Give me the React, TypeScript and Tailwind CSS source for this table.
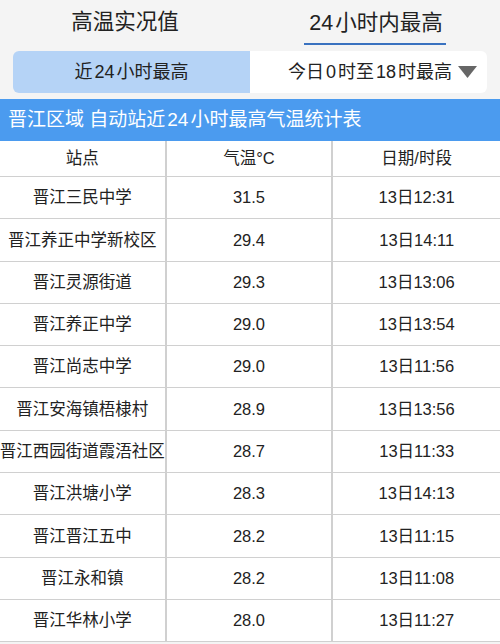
const rows: [string, string, string][] = [
  ['晋江三民中学', '31.5', '13日12:31'],
  ['晋江养正中学新校区', '29.4', '13日14:11'],
  ['晋江灵源街道', '29.3', '13日13:06'],
  ['晋江养正中学', '29.0', '13日13:54'],
  ['晋江尚志中学', '29.0', '13日11:56'],
  ['晋江安海镇梧棣村', '28.9', '13日13:56'],
  ['晋江西园街道霞浯社区', '28.7', '13日11:33'],
  ['晋江洪塘小学', '28.3', '13日14:13'],
  ['晋江晋江五中', '28.2', '13日11:15'],
  ['晋江永和镇', '28.2', '13日11:08'],
  ['晋江华林小学', '28.0', '13日11:27'],
];

const font = { fontFamily: '"Liberation Sans", "Noto Sans CJK SC", sans-serif' };

// digits get a little breathing room next to CJK, like iOS does
function Spaced({ text }: { text: string }) {
  return (
    <>
      {text.split(/(\d+)/).map((part, i) =>
        /^\d+$/.test(part) ? (
          <span key={i} className="px-[2px]">{part}</span>
        ) : (
          <span key={i}>{part}</span>
        ),
      )}
    </>
  );
}

function Row({ cells, header }: { cells: [string, string, string]; header?: boolean }) {
  return (
    <div className={`grid grid-cols-3 border-b border-[#d0d0d0] bg-white ${header ? 'h-[36px]' : 'h-[42.3px]'}`}>
      {cells.map((c, i) => (
        <div
          key={i}
          className={`flex items-center justify-center whitespace-nowrap text-[16.5px] text-[#222] ${i < 2 ? 'border-r-2 border-[#d0d0d0]' : ''}`}
        >
          {c}
        </div>
      ))}
    </div>
  );
}

export default function App() {
  return (
    <div className="w-[500px] h-[644px] overflow-hidden bg-[#f4f4f4]" style={font}>
      <div className="grid grid-cols-2 h-[45px]">
        <div className="flex items-center justify-center text-[21.5px] text-[#222]">高温实况值</div>
        <div className="flex flex-col items-center justify-end">
          <div className="text-[21.5px] text-[#222] leading-none pb-[9px]">
            <Spaced text="24小时内最高" />
          </div>
          <div className="w-[142px] h-[2px] bg-[#3a72c0]" />
        </div>
      </div>
      <div className="flex mx-[13px] mt-[6px] h-[42px] rounded-md overflow-hidden">
        <div className="w-[237px] bg-[#b5d3f6] flex items-center justify-center text-[18px] text-[#222]">
          <Spaced text="近24小时最高" />
        </div>
        <div className="flex-1 bg-white flex items-center justify-end pr-[10px] gap-[6px] text-[18px] text-[#222]">
          <span>
            <Spaced text="今日0时至18时最高" />
          </span>
          <svg width="19" height="14" viewBox="0 0 19 14">
            <path d="M0 1 H19 L9.5 13 Z" fill="#666" />
          </svg>
        </div>
      </div>
      <div className="mt-[6px] h-[42px] bg-[#4b9bef] flex items-center pl-[8px] text-[19px] text-white whitespace-nowrap">
        <Spaced text="晋江区域 自动站近24小时最高气温统计表" />
      </div>
      <Row header cells={['站点', '气温°C', '日期/时段']} />
      {rows.map((r, i) => (
        <Row key={i} cells={r} />
      ))}
    </div>
  );
}
